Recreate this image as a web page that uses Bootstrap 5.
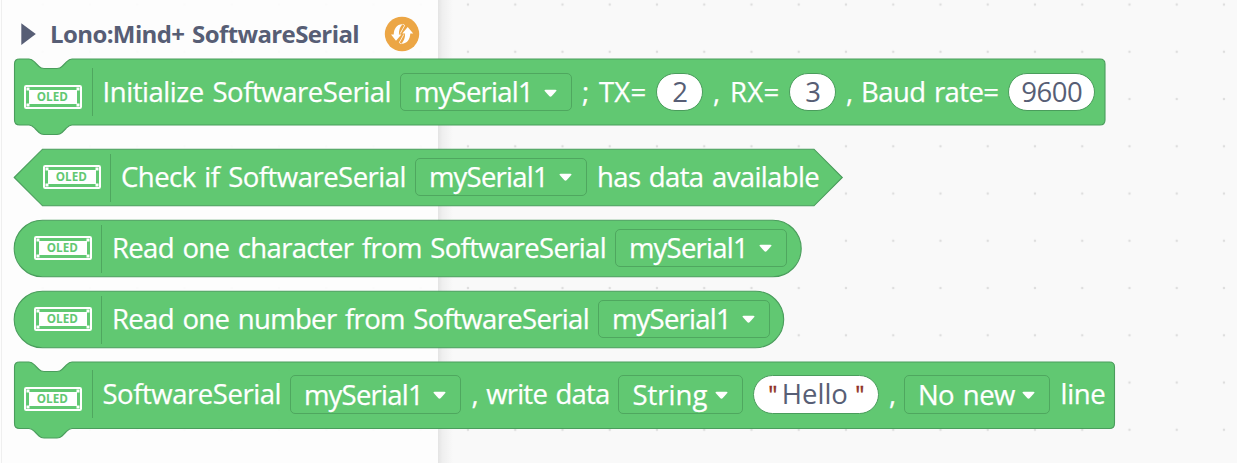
<!DOCTYPE html>
<html lang="en">
<head>
<meta charset="utf-8">
<meta name="viewport" content="width=device-width, initial-scale=1">
<title>Lono:Mind+ SoftwareSerial</title>
<link rel="stylesheet" href="https://cdn.jsdelivr.net/npm/bootstrap@5.3.0/dist/css/bootstrap.min.css">
<style>
body{width:1237px;height:463px;background:#f9f9f9;font-family:"Open Sans","Noto Sans",sans-serif;color:#575e75}
.backdrop{z-index:0}
.workspace{height:463px;z-index:1;padding-left:14px}
.category{height:59.5px;padding:8px 0 0 7px}
.category h1{width:309px;margin:0 0 0 13px;font-size:24px;font-weight:700;line-height:44px;word-spacing:2px;color:#575e75}
.category .reload{margin-left:24.5px}
.blk{position:relative;display:grid;column-gap:9.5px;align-items:center;height:57px;margin-bottom:14px;width:max-content}
.blk>*{position:relative}
.blk>.shape{position:absolute;left:-14px;top:-.3px;width:1237px;height:80px;overflow:visible;fill:#61c872;stroke:#4a9d5c;stroke-width:1.1}
.stack-blk{height:66.5px;padding-left:10.5px}
.oled{left:-.4px;top:-.4px}
.stack-blk .oled{top:4.1px}
.check-blk{padding-left:29px}
.round-blk{padding-left:20px}
.init{grid-template-columns:58px 1px 288.5px 172px 64.5px 47.5px 66.5px 47.5px 152.5px 87.5px;margin-bottom:23px}
.check{grid-template-columns:58px 1px 285px 172px 222px}
.readc{grid-template-columns:58px 1px 494px 172px}
.readn{grid-template-columns:58px 1px 477px 172px}
.write{grid-template-columns:58px 1px 178.5px 171.5px 138px 124.5px 126.5px 6px 146.5px 45px}
.sep{width:1.2px;height:48px;left:-.5px;background:#4fa75f}
.stack-blk .sep{top:-1px}
.txt{font-size:27.5px;line-height:38px;color:#fff;white-space:nowrap;word-spacing:2px;top:-1px;left:0;-webkit-text-stroke:.25px #fff}
.fld{height:38.5px;left:-.6px;top:-.6px;border:1px solid #4fa75f;border-radius:5px;padding:0 14px 0 13px}
.fld .txt{position:relative;width:119px;top:0;left:0}
.write .fld .w-string{width:75px}
.write .fld .w-line{width:97px}
.fld svg{position:relative;top:1px}
.val{height:38.5px;left:-.4px;top:-.6px;border:1px solid #4a9d5c;border-radius:20px;background:#fff}
.val .txt{position:relative;color:#575e75;left:.3px;top:-.4px;-webkit-text-stroke:0}
.val .w-num{width:15px}.val .w-baud{width:61px}.val .w-hello{width:66px;left:1px}
.val .quote{color:#8e2f28;width:9px;font-size:23px;-webkit-text-stroke:.5px #8e2f28}
.oled text{font:700 11.5px "Open Sans",sans-serif;fill:#61c872}
</style>
</head>
<body class="position-relative overflow-hidden m-0">
<svg class="backdrop position-absolute top-0 start-0" width="1237" height="463" aria-hidden="true">
  <defs>
    <pattern id="dots" x="444.4" y="-19.1" width="47.25" height="47.25" patternUnits="userSpaceOnUse"><path d="M22.4 23.6h2.4M23.6 22.4v2.4" stroke="#d6d6d6" stroke-width="1"/></pattern>
    <linearGradient id="edge"><stop stop-color="#e4e4e4"/><stop offset=".3" stop-color="#efefef"/><stop offset="1" stop-color="#f9f9f9"/></linearGradient>
    <symbol id="oled" viewBox="0 0 58 24">
      <rect x="1" y="1" width="56" height="22" rx="1.2" fill="none" stroke="#fff" stroke-width="2"/>
      <rect x="5" y="5" width="48" height="14" fill="#fff"/>
      <path d="M2.5 2.5h3v3h-3zM52.5 2.5h3v3h-3zM2.5 18.5h3v3h-3zM52.5 18.5h3v3h-3z" fill="#fff"/>
    </symbol>
    <symbol id="caret" viewBox="0 0 13 9"><path d="M1.6.7h9.8q1.7.2.7 1.6L7.8 7q-1.3 1.3-2.6 0L.9 2.3Q-.1.9 1.6.7z" fill="#fff"/></symbol>
  </defs>
  <rect width="1237" height="463" fill="url(#dots)"/>
  <rect width="438.5" height="463" fill="#fdfdfd" fill-opacity=".93"/>
  <path d="M1.5 0v463" stroke="#efefef"/>
  <rect x="438" width="15" height="463" fill="url(#edge)"/>
</svg>

<main class="workspace position-relative">
  <header class="category d-flex align-items-center">
    <svg width="16" height="24" viewBox="0 0 16 24"><path d="M.3 1.2 14.8 12 .3 23z" fill="#575e75"/></svg>
    <h1 class="fit text-nowrap">Lono:Mind+ SoftwareSerial</h1>
    <svg class="reload" width="36" height="36" viewBox="0 0 36 36">
      <circle cx="18" cy="18" r="17.2" fill="#eca645"/>
      <path d="M18.6 8.3C13 8 10 12.5 9.7 18.4H7L12 24.7 17.4 18.4H14.9C14.9 13.8 16 10.8 18.6 8.3zM17.4 27.7C23 28 26 23.5 26.3 17.6H29.2L23.7 11 18.3 17.6H21.1C21.1 22.2 20 25.2 17.4 27.7z" fill="#fff"/>
      <path d="M18.6 8.4Q21.8 8.6 19.8 11L16.2 17.6M17.4 27.6Q14.2 27.4 16.200 25L19.8 18.400" fill="none" stroke="#fff" stroke-width=".8"/>
    </svg>
  </header>

  <section class="blk stack-blk init">
    <svg class="shape"><path d="M14.5 5Q14.5 0 19.5 0H29C32 0 33.5 2 35 3.5L39 7.5Q41 9.5 44 9.5H57Q60 9.5 62 7.5L66 3.5C67.5 2 69 0 72 0H1100Q1105 0 1105 5V61Q1105 66 1100 66H72C69 66 67.5 68 66 69.5L62 73.5Q60 75.5 57 75.5H44Q41 75.5 39 73.5L35 69.5C33.5 68 32 66 29 66H19.5Q14.5 66 14.5 61z"/></svg>
    <svg class="oled" width="58" height="24"><use href="#oled"/><text x="12.8" y="16.1" textLength="31" lengthAdjust="spacingAndGlyphs">OLED</text></svg>
    <i class="sep"></i>
    <span class="txt fit">Initialize SoftwareSerial</span>
    <div class="fld d-flex align-items-center justify-content-between"><span class="txt fit">mySerial1</span><svg width="13" height="9"><use href="#caret"/></svg></div>
    <span class="txt fit">; TX=</span>
    <div class="val d-flex justify-content-center align-items-center"><span class="txt w-num fit">2</span></div>
    <span class="txt fit">, RX=</span>
    <div class="val d-flex justify-content-center align-items-center"><span class="txt w-num fit">3</span></div>
    <span class="txt fit">, Baud rate=</span>
    <div class="val d-flex justify-content-center align-items-center"><span class="txt w-baud fit">9600</span></div>
  </section>

  <section class="blk check-blk check">
    <svg class="shape"><path d="M14.2 28.5 42.5.2H814L842.3 28.5 814 56.8H42.5z"/></svg>
    <svg class="oled" width="58" height="24"><use href="#oled"/><text x="12.8" y="16.1" textLength="31" lengthAdjust="spacingAndGlyphs">OLED</text></svg>
    <i class="sep"></i>
    <span class="txt fit">Check if SoftwareSerial</span>
    <div class="fld d-flex align-items-center justify-content-between"><span class="txt fit">mySerial1</span><svg width="13" height="9"><use href="#caret"/></svg></div>
    <span class="txt fit">has data available</span>
  </section>

  <section class="blk round-blk readc">
    <svg class="shape"><rect x="14.2" y=".2" width="787" height="56.6" rx="28.3"/></svg>
    <svg class="oled" width="58" height="24"><use href="#oled"/><text x="12.8" y="16.1" textLength="31" lengthAdjust="spacingAndGlyphs">OLED</text></svg>
    <i class="sep"></i>
    <span class="txt fit">Read one character from SoftwareSerial</span>
    <div class="fld d-flex align-items-center justify-content-between"><span class="txt fit">mySerial1</span><svg width="13" height="9"><use href="#caret"/></svg></div>
  </section>

  <section class="blk round-blk readn">
    <svg class="shape"><rect x="14.2" y=".2" width="769.5" height="56.6" rx="28.3"/></svg>
    <svg class="oled" width="58" height="24"><use href="#oled"/><text x="12.8" y="16.1" textLength="31" lengthAdjust="spacingAndGlyphs">OLED</text></svg>
    <i class="sep"></i>
    <span class="txt fit">Read one number from SoftwareSerial</span>
    <div class="fld d-flex align-items-center justify-content-between"><span class="txt fit">mySerial1</span><svg width="13" height="9"><use href="#caret"/></svg></div>
  </section>

  <section class="blk stack-blk write">
    <svg class="shape"><path d="M14.5 5Q14.5 0 19.5 0H29C32 0 33.5 2 35 3.5L39 7.5Q41 9.5 44 9.5H57Q60 9.5 62 7.5L66 3.5C67.5 2 69 0 72 0H1109.5Q1114.5 0 1114.5 5V61.5Q1114.5 66.5 1109.5 66.5H72C69 66.5 67.5 68.5 66 70L62 74Q60 76 57 76H44Q41 76 39 74L35 70C33.5 68.5 32 66.5 29 66.5H19.5Q14.5 66.5 14.5 61.5z"/></svg>
    <svg class="oled" width="58" height="24"><use href="#oled"/><text x="12.8" y="16.1" textLength="31" lengthAdjust="spacingAndGlyphs">OLED</text></svg>
    <i class="sep"></i>
    <span class="txt fit">SoftwareSerial</span>
    <div class="fld d-flex align-items-center justify-content-between"><span class="txt fit">mySerial1</span><svg width="13" height="9"><use href="#caret"/></svg></div>
    <span class="txt fit">, write data</span>
    <div class="fld d-flex align-items-center justify-content-between"><span class="txt w-string fit">String</span><svg width="13" height="9"><use href="#caret"/></svg></div>
    <div class="val d-flex justify-content-center align-items-center"><span class="txt quote fit me-1">"</span><span class="txt w-hello fit">Hello</span><span class="txt quote fit ms-2">"</span></div>
    <span class="txt fit">,</span>
    <div class="fld d-flex align-items-center justify-content-between"><span class="txt w-line fit">No new</span><svg width="13" height="9"><use href="#caret"/></svg></div>
    <span class="txt fit">line</span>
  </section>
</main>
<script src="https://cdn.jsdelivr.net/npm/bootstrap@5.3.0/dist/js/bootstrap.bundle.min.js"></script>
<script>
// Track each label so that its text fills the width of its slot.
document.querySelectorAll('.fit').forEach(function (el) {
  if (el.textContent.length < 2) return;
  var range = document.createRange();
  range.selectNodeContents(el);
  var natural = range.getBoundingClientRect().width;
  el.style.letterSpacing = ((el.getBoundingClientRect().width - natural) / el.textContent.length) + 'px';
});
</script>
</body>
</html>
